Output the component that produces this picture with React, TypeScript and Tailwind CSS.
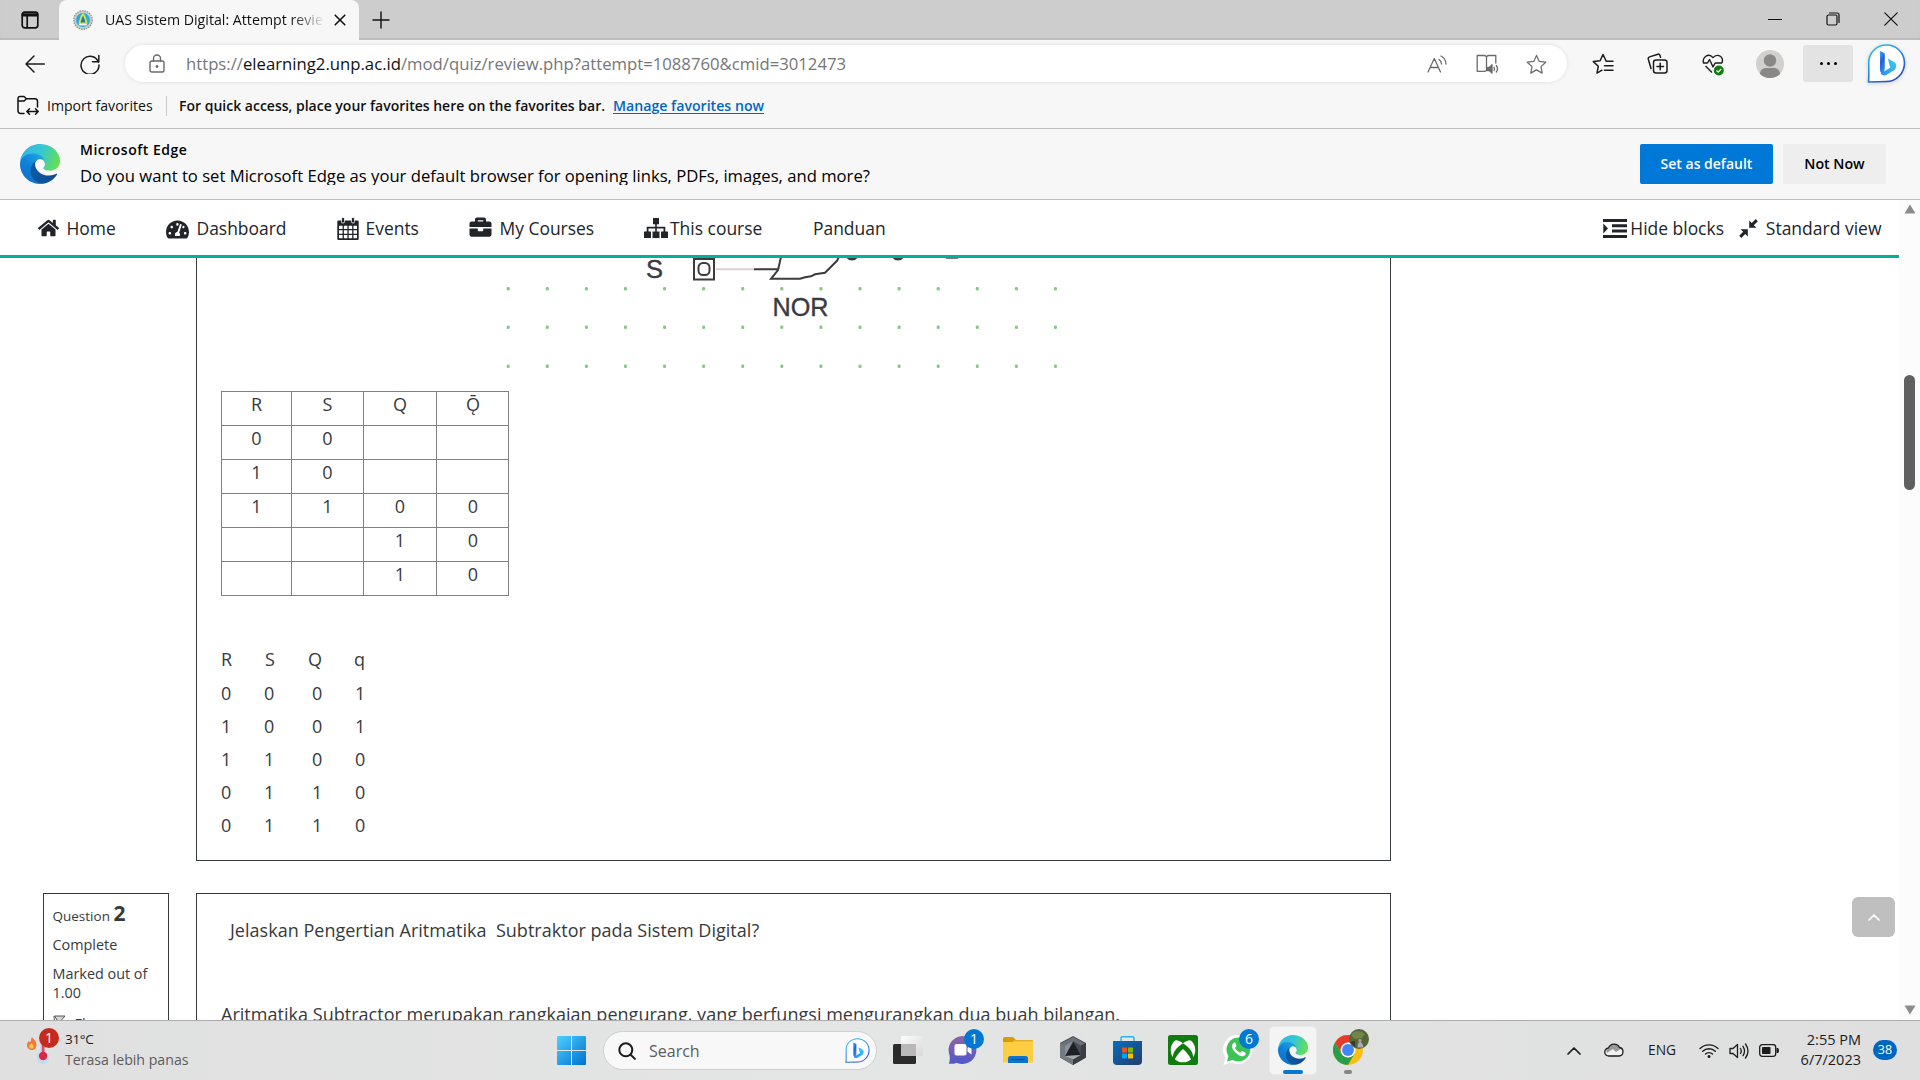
import React from "react";
import { FaHome, FaTachometerAlt, FaBriefcase } from "react-icons/fa";

type Box = { className?: string };

const BingMark = ({ id, className }: Box & { id: string }) => (
  <svg viewBox="0 0 38 39" className={className}>
    <defs>
      <linearGradient id={`${id}r`} x1="0" y1="0" x2="0.6" y2="1">
        <stop offset="0" stopColor="#22c8f4" />
        <stop offset="0.55" stopColor="#2b8be8" />
        <stop offset="1" stopColor="#1d4fc4" />
      </linearGradient>
      <linearGradient id={`${id}b`} x1="0" y1="0" x2="0.3" y2="1">
        <stop offset="0" stopColor="#3fa8f5" />
        <stop offset="0.5" stopColor="#2360dc" />
        <stop offset="1" stopColor="#2b8cf0" />
      </linearGradient>
      <linearGradient id={`${id}s`} x1="0" y1="1" x2="1" y2="0">
        <stop offset="0" stopColor="#2b8cf0" />
        <stop offset="1" stopColor="#35d3f2" />
      </linearGradient>
    </defs>
    <path d="M19 1C29 1 37 9 37 19S29 37.500 19 37.500C15 37.500 12 37.500 1 38C1.500 34 1.500 30 1.200 19C1 9 9 1 19 1Z" fill="#fff" stroke={`url(#${id}r)`} strokeWidth="1.600" />
    <path d="M20.500 14.500l7 4c2 2.500 1.500 5.500-.5 7.500l-8.300 5c-2.200 1-4.600.2-5.600-1.400L23 23.500l-1.500-4z" fill={`url(#${id}s)`} />
    <path d="M12.500 7l3.500 1.500q1.300.6 1.300 2V24q0 3.500-2 6c-1.700-.5-2.800-2.200-2.800-4.200z" fill={`url(#${id}b)`} />
  </svg>
);

const EdgeLogo = ({ id, className }: Box & { id: string }) => (
  <svg viewBox="0 0 256 256" className={className}>
    <defs>
      <linearGradient id={`${id}a`} x1="0.1" y1="0.5" x2="1" y2="0.5">
        <stop offset="0" stopColor="#0c59a4" />
        <stop offset="1" stopColor="#114a8b" />
      </linearGradient>
      <linearGradient id={`${id}b`} x1="0.8" y1="0.2" x2="0.3" y2="1">
        <stop offset="0" stopColor="#1b9de2" />
        <stop offset="0.5" stopColor="#0f7fd6" />
        <stop offset="1" stopColor="#0d6fcb" />
      </linearGradient>
      <linearGradient id={`${id}c`} x1="0" y1="0.3" x2="1" y2="0.55">
        <stop offset="0" stopColor="#35b5ea" />
        <stop offset="0.5" stopColor="#36c6d2" />
        <stop offset="1" stopColor="#66e04e" />
      </linearGradient>
    </defs>
    <path d="M231 190.500c-3.400 1.800-6.900 3.400-10.500 4.700a101 101 0 0 1-35.900 6.500c-47.300 0-88.500-32.500-88.500-74.300.1-11.400 6.400-21.900 16.400-27.300-42.800 1.800-53.800 46.400-53.800 72.500 0 74 68.100 81.400 82.800 81.400 7.900 0 19.800-2.300 27-4.600l1.300-.4a128 128 0 0 0 66.600-52.800 4 4 0 0 0-5.400-5.700z" fill={`url(#${id}a)`} />
    <path d="M105.700 241.400A79 79 0 0 1 83 220.100a80.700 80.700 0 0 1 29.500-120c3.200-1.500 8.500-4.100 15.600-4a32.400 32.400 0 0 1 25.700 13c4 5.300 6.200 11.800 6.300 18.500 0-.2 24.500-79.600-80-79.600C36.200 48 .1 89.700.1 126.200c-.2 19.300 4 38.500 12.100 56a128 128 0 0 0 156.400 67.100 75.600 75.600 0 0 1-62.800-8z" fill={`url(#${id}b)`} />
    <path d="M152.300 148.900c-.9 1-3.400 2.500-3.400 5.600 0 2.600 1.700 5.200 4.800 7.300 14.400 10.100 41.700 8.700 41.800 8.700 10.700 0 21.200-2.900 30.500-8.300a61.800 61.800 0 0 0 30.400-53.300c.3-22.400-8-37.300-11.300-43.900C223.900 23.900 177.700 0 127.600 0 57.500 0 .6 56.200 0 126.200c.5-36.500 36.800-66 80-66 3.500 0 23.500.3 42 10.100 16.300 8.500 24.900 18.900 30.900 29.200 6.100 10.700 7.300 24.100 7.300 29.500s-2.700 13.300-7.900 19.900z" fill={`url(#${id}c)`} />
  </svg>
);

const Line = ({ children, className, box, w = 1.3 }: { children: React.ReactNode; className?: string; box: string; w?: number }) => (
  <svg viewBox={box} className={className} fill="none" stroke="currentColor" strokeWidth={w} strokeLinecap="round" strokeLinejoin="round">
    {children}
  </svg>
);

const TabStrip = () => (
  <div className="flex h-10 items-start bg-[#cdcdcd] text-[#111] shadow-[inset_0_-2px_1px_#bdbdbd]">
    <Line box="0 0 18 18" className="ml-[21px] mt-[11px] h-[18px] w-[18px]" w={1.7}>
      <rect x="1.200" y="1.200" width="15.600" height="15.600" rx="2.500" />
      <path d="M1.500 3.200h15M1.500 4.600h15M6.200 5v11.500" />
    </Line>
    <div className="ml-5 flex h-10 w-[300px] items-center rounded-t-lg bg-[#f7f7f7]">
      <svg viewBox="0 0 20 20" className="ml-[14px] h-5 w-5 shrink-0">
        <circle cx="10" cy="10" r="9.300" fill="#c9ccc6" stroke="#8b9494" strokeWidth="1.200" strokeDasharray="1.500 1" />
        <circle cx="10" cy="10" r="7" fill="#2aa9dc" />
        <path d="M10 3l2 2.500 2.500 7-1.500 1H7l-1.500-1L8 5.500z" fill="#e3e33d" />
        <path d="M10 5.500l1.500 3.500 1 3.500h-5l1-3.500z" fill="#1e7bb8" />
        <path d="M5.500 13.500h9l-1 2h-7z" fill="#eef3f0" />
      </svg>
      <div className="ml-[12px] w-[218px] overflow-hidden bg-linear-to-r from-[#111] from-85% to-[#e8e8e8] bg-clip-text text-[14.2px] whitespace-nowrap text-transparent">UAS Sistem Digital: Attempt revie</div>
      <Line box="0 0 12 12" className="ml-[11px] h-3 w-3 shrink-0" w={1.6}><path d="M1.200 1.200l9.600 9.600M10.800 1.200l-9.600 9.600" /></Line>
    </div>
    <Line box="0 0 18 18" className="ml-[13px] mt-[10.500px] h-[18px] w-[18px]" w={1.4}><path d="M9 1v16M1 9h16" /></Line>
    <div className="mt-3 mr-[22px] ml-auto flex items-center gap-[44px]">
      <Line box="0 0 14 14" className="h-[14px] w-[14px]" w={1.2}><path d="M.5 7.500h13" /></Line>
      <Line box="0 0 14 14" className="h-[14px] w-[14px]" w={1.2}><rect x="1" y="3" width="10" height="10" rx="1.500" /><path d="M3.500 1h7.500a2 2 0 0 1 2 2v7.500" /></Line>
      <Line box="0 0 14 14" className="h-[14px] w-[14px]" w={1.2}><path d="M.8.8l12.400 12.400M13.200.8L.8 13.200" /></Line>
    </div>
  </div>
);

const STAR = "M11 1.500l2.900 6.300 6.800.8-5 4.700 1.300 6.800-6-3.400-6 3.400 1.300-6.800-5-4.700 6.800-.8z";

const Toolbar = () => (
  <div className="flex h-[48px] items-start pt-[5px] text-[#1c1c1c]">
    <div className="flex h-[37px] w-[125px] shrink-0 items-center">
      <Line box="0 0 20 18" className="ml-[25px] h-[18px] w-5" w={1.5}><path d="M19.300 9H1M9 1L1 9l8 8" /></Line>
      <Line box="0 0 20 20" className="ml-[35px] h-5 w-5" w={1.5}><path d="M18.500 8.300A9 9 0 1 0 19 11M18.800 1.500v6.300h-6.300" /></Line>
    </div>
    <div className="flex h-[37px] w-[1442px] shrink-0 items-center rounded-full bg-white text-[#6b6b6b] shadow-[0_0_4px_#dedede]">
      <Line box="0 0 16 19" className="ml-[24px] h-[19px] w-4" w={1.4}>
        <rect x="1" y="7" width="14" height="11" rx="1.800" /><path d="M4.500 7V4.500a3.500 3.500 0 0 1 7 0V7" /><circle cx="8" cy="12.500" r=".7" fill="currentColor" />
      </Line>
      <div className="ml-[21px] text-[16.72px] whitespace-nowrap text-[#767676]">https://<span className="text-[#111]">elearning2.unp.ac.id</span>/mod/quiz/review.php?attempt=1088760&amp;cmid=3012473</div>
      <Line box="0 0 20 18" className="mr-[29px] ml-auto h-[18px] w-5" w={1.3}>
        <path d="M1 17L7.300 3.500 13.500 17M3.200 12.500h8.200M12 4.500c1.700 1 2.500 2.500 2.500 4.500M14 1c3 1.600 4.800 4.500 5 8" />
      </Line>
      <Line box="0 0 23 20" className="mr-[27px] h-5 w-[23px]" w={1.3}>
        <path d="M10.500 3v13.500M10.500 3C10 1.500 9 1.500 8 1.500H1.200v15.800H8c1 0 2-.3 2.500-1M10.500 3c.5-1.500 1.500-1.500 2.500-1.500h6.800V9" />
        <path d="M11.500 13.500h1.800l2.700-2.700v8.200l-2.700-2.500h-1.800z" fill="currentColor" /><path d="M18 13.300c.6 1 .6 2.200 0 3.200M20.300 11.500c1.500 2 1.500 4.500 0 6.500" />
      </Line>
      <Line box="0 0 22 21" className="mr-[20px] h-5 w-[21px]" w={1.3}><path d={STAR} /></Line>
    </div>
    <div className="flex h-[37px] shrink-0 items-center">
      <Line box="0 0 22 21" className="ml-[25px] h-[21px] w-[22px]" w={1.5}><path d="M14 7.800L11 1.500 8.100 7.800l-6.800.8 5 4.700L5 20.100l5-2.900M14 8.200h7M12.500 12.800H21M12.500 17.200H21" /></Line>
      <Line box="0 0 21 21" className="ml-[33px] h-[21px] w-[21px]" w={1.5}><rect x="6.500" y="7" width="13.500" height="13" rx="2.500" /><path d="M13.200 10.200v6.600M10 13.500h6.500M4 15.500L1.300 6.300c-.3-1.200.2-2 1.200-2.400L11 1.200c1-.3 1.700.2 2 1.300l.5 1.700" /></Line>
      <svg viewBox="0 0 22 22" className="mt-[2px] ml-[34px] h-[22px] w-[22px]" fill="none" stroke="#1c1c1c" strokeWidth="1.400" strokeLinejoin="round">
        <path d="M10 18.500L3.500 12M20 9c1-3 .5-5-1.300-6.500C16 .8 13 1.300 11 3.600 9 1.300 6 .8 3.500 2.500 1.300 4.300.7 6.500 1.500 9H5.500l2-3.500 3.500 7.400 2.200-3.900H20" />
        <circle cx="16.800" cy="16.500" r="5" fill="#107c10" stroke="none" /><path d="M14.500 16.500l1.700 1.700 3-3.200" stroke="#fff" strokeWidth="1.200" />
      </svg>
      <svg viewBox="0 0 28 28" className="ml-[32px] h-7 w-7">
        <circle cx="14" cy="14" r="14" fill="#d2d0ce" /><circle cx="14" cy="10.500" r="6.200" fill="#8a8886" /><path d="M4 24c0-4 3-6 6-6h8c3 0 6 2 6 6-2.500 2.600-6 4-10 4s-7.500-1.400-10-4z" fill="#8a8886" />
      </svg>
      <div className="ml-[19px] flex h-[37px] w-[50px] items-center justify-center gap-1 rounded-[3px] bg-[#e3e3e3]">
        <i className="size-[3px] rounded-full bg-black" /><i className="size-[3px] rounded-full bg-black" /><i className="size-[3px] rounded-full bg-black" />
      </div>
      <BingMark id="bt" className="ml-[14px] h-[39px] w-[39px] drop-shadow-sm" />
    </div>
  </div>
);

const FavoritesBar = () => (
  <div className="flex h-[41px] items-start border-b border-[#bfbfbf] text-[#111]">
    <Line box="0 0 22 20" className="mt-[7px] ml-[17px] h-5 w-[22px] shrink-0" w={1.5}>
      <path d="M7 18.500H3.500A2.500 2.500 0 0 1 1 16V3.500A2 2 0 0 1 3 1.500h4l2.500 2.200h8.500A2.500 2.500 0 0 1 20.500 6v6M1 6h6l2.500-2.300M10 16.500h11M12.500 13.800L9.800 16.500l2.700 2.700M18.500 13.800l2.700 2.700-2.700 2.700" />
    </Line>
    <div className="ml-[8px] w-[119px] text-[14.1px] leading-[35px]">Import favorites</div>
    <div className="mt-2 h-5 w-px bg-[#c8c8c8]" />
    <div className="ml-[12px] w-[434px] text-[14px] leading-[35px] font-semibold whitespace-nowrap">For quick access, place your favorites here on the favorites bar.</div>
    <div className="text-[14.15px] leading-[35px] font-semibold text-[#0067c0] underline underline-offset-2">Manage favorites now</div>
  </div>
);

const DefaultPrompt = () => (
  <div className="flex h-[71px] items-center border-b border-[#bfbfbf] text-black">
    <EdgeLogo id="ei" className="ml-5 h-10 w-10" />
    <div className="-mt-[1px] ml-5 h-[56px] flex-1">
      <div className="h-[29px] pt-[1px] text-[14px] leading-[26px] font-semibold tracking-[0.5px]">Microsoft Edge</div>
      <div className="h-[20px] overflow-hidden text-[16.65px] leading-[22px]">Do you want to set Microsoft Edge as your default browser for opening links, PDFs, images, and more?</div>
    </div>
    <div className="h-10 w-[133px] rounded-[2px] bg-[#0078d7] text-center text-[14px] leading-[39px] font-semibold text-white">Set as default</div>
    <div className="mr-[34px] ml-[10px] h-10 w-[103px] rounded-[2px] bg-[#eeeeee] text-center text-[14.2px] leading-[39px] font-semibold">Not Now</div>
  </div>
);

const CalendarIcon = () => (
  <svg viewBox="0 0 22 23" className="h-[23px] w-[22px]">
    <path d="M1.500 3.500h19a1.200 1.200 0 0 1 1.200 1.200v17a1.200 1.200 0 0 1-1.200 1.200h-19A1.200 1.200 0 0 1 .3 21.700v-17A1.200 1.200 0 0 1 1.500 3.500z" fill="#212529" />
    <path d="M2 8.700h3.600v3.400H2zM6.900 8.700h3.500v3.400H6.900zM11.700 8.700h3.500v3.400h-3.500zM16.500 8.700h3.500v3.400h-3.500zM2 13.300h3.600v3.400H2zM6.900 13.300h3.500v3.400H6.900zM11.700 13.300h3.500v3.400h-3.500zM16.500 13.300h3.500v3.400h-3.500zM2 17.900h3.600v3.400H2zM6.900 17.900h3.500v3.400H6.900zM11.700 17.900h3.500v3.400h-3.500zM16.500 17.900h3.500v3.400h-3.500z" fill="#fff" />
    <rect x="4.500" y=".5" width="3" height="5.500" rx="1.300" fill="#212529" stroke="#fff" strokeWidth=".8" />
    <rect x="14.500" y=".5" width="3" height="5.500" rx="1.300" fill="#212529" stroke="#fff" strokeWidth=".8" />
  </svg>
);

const SiteNav = () => (
  <div className="flex h-[58px] shrink-0 items-center border-b-[3px] border-[#00b29c] pt-[2px] text-[17.45px] whitespace-nowrap text-[#212529]">
    <div className="ml-[38px] flex w-[128px] items-center"><FaHome className="h-[20px] w-[21px]" /><span className="ml-[7.5px]">Home</span></div>
    <div className="flex w-[171px] items-center"><FaTachometerAlt className="mt-[2px] h-[23px] w-[23px]" /><span className="ml-[7.5px]">Dashboard</span></div>
    <div className="flex w-[132px] items-center"><CalendarIcon /><span className="ml-[6.5px]">Events</span></div>
    <div className="flex w-[175px] items-center"><FaBriefcase className="-mt-[3px] h-[22px] w-[23px]" /><span className="ml-[7.5px]">My Courses</span></div>
    <div className="flex w-[169px] items-center">
      <svg viewBox="0 0 24 20" className="h-5 w-6" fill="currentColor"><path d="M9 0h6v6.200h-2.200v2.500h8.500v4.800H24V20h-7v-6.500h2.500v-3h-6.700v3h2.700V20h-7v-6.500h2.700v-3H4.500v3H7V20H0v-6.500h2.700V8.700h8.500V6.200H9z" /></svg>
      <span className="ml-[2px]">This course</span>
    </div>
    <span>Panduan</span>
    <svg viewBox="0 0 24 19" className="ml-auto h-[19px] w-6" fill="currentColor"><path d="M0 0h24v3H0zM9 5.300h15v3H9zM9 10.600h15v3H9zM0 16h24v3H0zM.3 4.500L5 9.500.3 14.500z" /></svg>
    <span className="ml-[3px] w-[109px]">Hide blocks</span>
    <svg viewBox="0 0 19 19" className="h-[19px] w-[19px]" fill="currentColor"><path d="M8.800 10.200v7.300l-2.600-2.600L2.300 18.900.2 16.800l4-4-2.700-2.600zM10.200 8.800V1.500l2.600 2.600L16.700.1l2.100 2.100-4 4 2.700 2.600z" /></svg>
    <span className="mr-[17.5px] ml-[7.5px] text-[17.5px]">Standard view</span>
  </div>
);

const Diagram = () => (
  <svg viewBox="490 258 600 130" className="ml-[293px] h-[130px] w-[600px]" fontFamily="Liberation Sans, Arial, sans-serif">
    {[288.500, 327, 366].map((y) =>
      Array.from({ length: 15 }, (_, i) => <rect key={`${y}${i}`} x={506.700 + i * 39.090} y={y - 1.500} width="3" height="3.400" rx="1.200" fill="#86c886" />)
    )}
    <g fill="#3a3a42" stroke="#3a3a42" strokeWidth=".4">
      <text x="646" y="277.500" fontSize="25.500">S</text>
      <text x="772.500" y="316" fontSize="26.500" textLength="56" lengthAdjust="spacingAndGlyphs">NOR</text>
    </g>
    <g fill="none" stroke="#3c3c3c" strokeWidth="2">
      <rect x="694" y="259" width="20" height="20.500" />
      <rect x="698.500" y="263" width="11" height="12" rx="4.500" />
      <path d="M716 269.200h38" stroke="#d8d0d8" />
      <path d="M754 269.200h24M781 257l-3 13-7 8.800h29l5-1.500 6-1 4-2 10-1.500 3-3 5-5 4-4 2-4" />
    </g>
    <path d="M846 257h12q-2 3.500-6 3.500t-6-3.500zM892 257h12q-2 3.500-6 3.500t-6-3.500z" fill="#3c3c3c" />
    <path d="M946 258.500h12" stroke="#777" />
  </svg>
);

const truth = [["R", "S", "Q", "Ǭ"], ["0", "0", "", ""], ["1", "0", "", ""], ["1", "1", "0", "0"], ["", "", "1", "0"], ["", "", "1", "0"]];
const answer = [["R", "S", "Q", "q"], ["0", "0", "0", "1"], ["1", "0", "0", "1"], ["1", "1", "0", "0"], ["0", "1", "1", "0"], ["0", "1", "1", "0"]];

const Page = () => (
  <div className="min-h-0 flex-1 overflow-hidden text-[18px] text-[#373a3c]">
    <div className="ml-[196px] h-[603px] w-[1195px] border border-t-0 border-[#373a3c]">
      <Diagram />
      <div className="mt-[3px] ml-6 grid w-[288px] grid-cols-[70px_72px_73px_73px] border-r border-b border-[#808080]">
        {truth.flat().map((v, i) => (
          <div key={i} className="h-[34px] border-t border-l border-[#808080] text-center leading-[24px]">{v}</div>
        ))}
      </div>
      <div className="mt-[48px] ml-6">
        {answer.map((row, r) => (
          <div key={r} className={r === 0 ? "grid h-[34px] grid-cols-[44px_43px_46px_20px]" : "grid h-[33px] grid-cols-[43px_48px_43px_20px]"}>
            {row.map((v, c) => <span key={c} className="leading-[30px]">{v}</span>)}
          </div>
        ))}
      </div>
    </div>
    <div className="mt-[32px] flex h-[200px]">
      <div className="ml-[43px] w-[126px] border border-[#373a3c] pl-[8.5px] text-[14.4px]">
        <div className="mt-[5px] h-[28px] text-[13.5px] leading-[28px]">Question <span className="text-[21px] font-bold">2</span></div>
        <div className="mt-[8px] leading-[20px]">Complete</div>
        <div className="mt-[9px] leading-[19px]">Marked out of<br />1.00</div>
        <div className="mt-[12px] flex items-center gap-[8px] leading-[20px]">
          <svg viewBox="0 0 14 16" className="-mt-1 h-4 w-[14px]" fill="#d5d5d5" stroke="#555" strokeWidth="1"><path d="M2 15L1 2M1.500 2H12L6 9z" /></svg>
          <span>Flag</span>
        </div>
      </div>
      <div className="ml-[27px] w-[1195px] border border-[#373a3c] pl-6 whitespace-pre">
        <div className="mt-[22px] ml-[9px] h-[28px] tracking-[0.02px] leading-[28px]">Jelaskan Pengertian Aritmatika  Subtraktor pada Sistem Digital?</div>
        <div className="mt-[56px] tracking-[0.025px] leading-[28px]">Aritmatika Subtractor merupakan rangkaian pengurang, yang berfungsi mengurangkan dua buah bilangan.</div>
      </div>
    </div>
  </div>
);

const Scrollbar = () => (
  <div className="flex w-[21px] flex-col items-center bg-[#fcfcfc]">
    <svg viewBox="0 0 12 10" className="mt-[4px] h-[10px] w-3"><path d="M6 .5L11.500 9.500H.5z" fill="#8b8b8b" /></svg>
    <div className="mt-[161px] h-[115px] w-[11px] rounded-full bg-[#606060]" />
    <svg viewBox="0 0 12 10" className="mt-auto mb-[5px] h-[10px] w-3"><path d="M6 9.500L11.500.5H.5z" fill="#8b8b8b" /></svg>
  </div>
);

const Badge = ({ children, className }: { children: React.ReactNode; className: string }) => (
  <span className={`absolute flex size-5 items-center justify-center rounded-full text-[14px] leading-none text-white ${className}`}>{children}</span>
);

const Taskbar = () => (
  <div className="flex h-[60px] shrink-0 border-t border-[#adadad] bg-linear-to-r from-[#e0e0e0] via-[#e4e5e5] via-45% to-[#dfdfe0] text-[#1c1c1c]">
    <div className="flex h-full w-[557px] shrink-0 items-start">
      <div className="relative mt-[14px] ml-[26px] h-[34px] w-[39px]">
        <svg viewBox="0 0 34 34" className="h-[34px] w-[34px]">
          <path d="M6 2c1 2 4.500 4 4.500 7.500S8.500 15 6 15s-5-1.500-5-5c0-2 1-2.500 1.500-4 1 1 1.500 1 2 1C5 5 5 4 6 2z" fill="#f0793c" />
          <path d="M5.500 8c1.500 1.500 2.500 3 2 4.500S3.500 14 3.300 12s1-2.500 2.200-4z" fill="#ffc24a" />
          <path d="M14 2h6v15a6.500 6.500 0 1 1-6 0z" fill="#c3dcf3" /><path d="M15.800 2h2.600v17h-2.600z" fill="#e8485c" /><circle cx="17.100" cy="21" r="4.200" fill="#dc2748" />
        </svg>
        <Badge className="-top-[7px] left-[13px] bg-[#c42b1c]">1</Badge>
      </div>
      <div className="mt-[8px] leading-[20px]"><div className="h-[21px] text-[13.5px] tracking-[-0.3px]">31°C</div><div className="text-[14.15px] text-[#5c5c5c]">Terasa lebih panas</div></div>
    </div>
    <svg viewBox="0 0 29 29" className="mt-[15px] h-[29px] w-[29px] shrink-0">
      <defs><linearGradient id="win" x1="0" y1="0" x2="1" y2="1"><stop offset="0" stopColor="#4fd0ff" /><stop offset="1" stopColor="#0070d0" /></linearGradient></defs>
      <path d="M1 0h13v14H0V1q0-1 1-1zM15 0h13q1 0 1 1v13H15zM0 15h14v14H1q-1 0-1-1zM15 15h14v13q0 1-1 1H15z" fill="url(#win)" />
    </svg>
    <div className="mt-[10px] ml-[17px] flex h-[39px] w-[274px] shrink-0 items-center rounded-full border border-[#cfcfcf] bg-[#f8f8f8]">
      <Line box="0 0 18 18" className="ml-[14px] h-[18px] w-[18px]" w={2}><circle cx="7.800" cy="7.800" r="6.500" /><path d="M12.700 12.700l4.200 4.200" /></Line>
      <span className="ml-[13px] text-[16px] text-[#5c5c5c]">Search</span>
      <BingMark id="bs" className="mr-[6px] ml-auto h-[25px] w-[25px]" />
    </div>
    <svg viewBox="0 0 30 28" className="mt-[15px] ml-[16px] h-7 w-[30px] shrink-0">
      <defs><linearGradient id="tv" x1="0" y1="0" x2="1" y2="1"><stop offset="0" stopColor="#fdfdfd" /><stop offset="1" stopColor="#d8d8d8" /></linearGradient></defs>
      <rect y="8" width="23" height="20" rx="1.500" fill="#2b2b2b" /><rect x="8" width="22" height="20" rx="1.500" fill="url(#tv)" /><path d="M8 8h15v12H8z" fill="#b9b9b9" />
    </svg>
    <div className="relative mt-[15px] ml-[25px] h-7 w-[29px] shrink-0">
      <svg viewBox="0 0 29 28" className="h-7 w-[29px]">
        <defs><linearGradient id="ch" x1="0" y1="0" x2="0" y2="1"><stop offset="0" stopColor="#9061a8" /><stop offset="1" stopColor="#5059c9" /></linearGradient></defs>
        <path d="M14.500 0a14 14 0 1 1-6 26.700C6 28 3 28 .8 27.600 2 25 2 22.500 1.500 19A14 14 0 0 1 14.500 0z" fill="url(#ch)" />
        <rect x="6.500" y="8" width="12" height="11.500" rx="2" fill="#fff" /><path d="M19.500 12l4-3v9.500l-4-3z" fill="#fff" />
      </svg>
      <Badge className="-top-[7px] left-[16px] bg-[#0078d4]">1</Badge>
    </div>
    <svg viewBox="0 0 30 27" className="mt-[16px] ml-[26px] h-[27px] w-[30px] shrink-0">
      <path d="M0 1.500Q0 0 1.500 0H10l3 3-2 3H0z" fill="#dc9a05" /><path d="M0 5h9.500l2.500-1.800H30V25.500H0z" fill="#ffcd41" /><path d="M12 3.200h18V4.200H11z" fill="#d9a01c" />
      <path d="M5 26v-4.500q0-2.500 2.500-2.500h15q2.500 0 2.500 2.500V26z" fill="#0c75cc" /><path d="M8.500 22.500h13" stroke="#064f93" strokeWidth="1.200" />
    </svg>
    <svg viewBox="0 0 28 29" className="mt-[15px] ml-[26px] h-[29px] w-7 shrink-0">
      <path d="M14 0l13 7v14.500L14 29 1 21.500V7z" fill="#4a4e54" /><path d="M14 1l12 6.500-4 2L14 5 6 9.500l-4-2z" fill="#6b7178" /><path d="M14 29v-5l8-4.500v-10l5-2.500v14.500z" fill="#3a3e44" /><path d="M1 7l5 2.500v10l8 4.500v5L1 21.500z" fill="#747a81" /><path d="M14.500 6l7 13-15.500 1z" fill="#1d2024" /><path d="M14 5l-8 4.500V20z" fill="#8b9198" /><path d="M21.500 19L14 23.500 6 20z" fill="#a6abb0" />
    </svg>
    <svg viewBox="0 0 29 29" className="mt-[15px] ml-[26px] h-[29px] w-[29px] shrink-0">
      <defs><linearGradient id="st" x1="0" y1="0" x2="1" y2="1"><stop offset="0" stopColor="#0a6cba" /><stop offset="1" stopColor="#223d70" /></linearGradient></defs>
      <path d="M8 5.500V2q0-1.300 1.300-1.300h10.400Q21 .7 21 2v3.500" fill="none" stroke="#2ab4e8" strokeWidth="1.400" /><path d="M0 5h29v20q0 4-4 4H4q-4 0-4-4z" fill="url(#st)" />
      <path d="M9 11.500h5v5H9z" fill="#f25022" /><path d="M15 11.500h5v5h-5z" fill="#7fba00" /><path d="M9 17.500h5v5H9z" fill="#00a4ef" /><path d="M15 17.500h5v5h-5z" fill="#ffb900" />
    </svg>
    <svg viewBox="0 0 30 30" className="mt-[14px] ml-[26px] h-[30px] w-[30px] shrink-0">
      <rect width="30" height="30" rx="2.500" fill="#107c10" /><circle cx="15" cy="15" r="12.300" fill="#fff" />
      <path d="M6.300 5.500C9 4.500 12 6 15 8.300 18 6 21 4.500 23.700 5.500 20 1 10 1 6.300 5.500zM11.500 10.800C7 14.500 3.500 20 5.500 24.500l1 1c1.200-4 5-8.500 8.500-11.500 3.500 3 7.300 7.500 8.500 11.500l1-1c2-4.500-1.500-10-6-13.700L15 8.300z" fill="#107c10" />
    </svg>
    <div className="relative mt-[14px] ml-[25px] h-[30px] w-[30px] shrink-0">
      <svg viewBox="0 0 30 30" className="h-[30px] w-[30px]">
        <path d="M15.500 0A14.500 14.500 0 1 1 8.500 27.500L.5 30l2-7.500A14.500 14.500 0 0 1 15.500 0z" fill="#fff" /><path d="M15.500 2.500A12 12 0 1 1 9.500 25L4 26.500 5.500 21A12 12 0 0 1 15.500 2.500z" fill="#3dc454" />
        <path d="M10.500 8c-3 2.500-1.500 6 2 9.500s7.500 5.200 9.800 2.300c.8-1.300.5-2.100-.5-2.600l-2.400-1.200c-1-.4-1.600 1.900-2.500 1.600-2-.7-4-2.500-4.800-4.500-.3-.8 1.700-1.500 1.300-2.700l-1-2.400c-.5-.8-1.300-.7-1.900 0z" fill="#fff" />
      </svg>
      <Badge className="-top-[6px] left-[16px] bg-[#0078d4]">6</Badge>
    </div>
    <div className="mt-[5px] ml-[16px] flex h-[49px] w-[48px] shrink-0 flex-col items-center rounded-[5px] border border-[#e9e9e9] bg-[#f4f4f4]">
      <EdgeLogo id="et" className="mt-[8px] h-[30px] w-[30px]" />
      <div className="mt-[5px] h-1 w-5 shrink-0 rounded-full bg-[#0078d4]" />
    </div>
    <div className="relative mt-[14px] ml-[16px] w-[30px] shrink-0">
      <svg viewBox="0 0 48 48" className="h-[30px] w-[30px]">
        <circle cx="24" cy="24" r="24" fill="#fbbf12" />
        <path d="M44.800 12A24 24 0 0 0 3.200 12l10.400 18L24 12z" fill="#e33b2e" />
        <path d="M3.200 12A24 24 0 0 0 24 48l10.400-18H24L13.600 30z" fill="#2a9d48" />
        <circle cx="24" cy="24" r="12" fill="#fff" /><circle cx="24" cy="24" r="9.500" fill="#4285f4" />
      </svg>
      <svg viewBox="0 0 20 20" className="absolute -top-[6px] left-[16px] size-5">
        <circle cx="10" cy="10" r="10" fill="#54663a" /><path d="M2 5q7-6 14 0l-3 4-8 1z" fill="#6f8549" /><circle cx="11" cy="11.500" r="1.700" fill="#b8957c" /><path d="M8.500 18.500q0-5.500 2.500-5.500t3.500 5.500z" fill="#a8a8b8" /><path d="M1 13l5-1v6z" fill="#37352c" />
      </svg>
      <div className="mt-[5px] ml-[11px] h-1 w-2 rounded-full bg-[#868686]" />
    </div>
    <div className="mr-[23px] ml-auto flex h-full items-center">
      <Line box="0 0 14 8" className="h-2 w-[14px]" w={1.7}><path d="M1 7l6-6 6 6" /></Line>
      <svg viewBox="0 0 20 14" className="-mt-[2px] ml-[23px] h-[14px] w-5"><path d="M5 13a4 4 0 0 1-.5-8 6 6 0 0 1 11-.500A4.300 4.300 0 0 1 15 13z" fill="#f2f2f2" /><path d="M2 6.500l3-1A5.500 5.500 0 0 1 15 4l2 1.800L12 9l-3-3-6 4z" fill="#999" /><path d="M5 13a4 4 0 0 1-.5-8 6 6 0 0 1 11-.500A4.300 4.300 0 0 1 15 13z" fill="none" stroke="#1c1c1c" strokeWidth="1.300" /></svg>
      <span className="ml-[24px] w-[51px] text-[13.75px]">ENG</span>
      <Line box="0 0 20 15" className="h-[15px] w-5" w={1.4}><path d="M1 5.500a13 13 0 0 1 18 0M3.700 8.300a9.200 9.200 0 0 1 12.600 0M6.500 11a5.200 5.200 0 0 1 7 0" /><circle cx="10" cy="13.500" r=".8" fill="currentColor" /></Line>
      <Line box="0 0 20 16" className="ml-[10px] h-4 w-5" w={1.3}><path d="M1 5.500h3l4.500-4v13L4 10.500H1zM11.500 5.500q1.500 2.500 0 5M14 3.300q3 4.700 0 9.400M16.500 1q5 7 0 14" /></Line>
      <svg viewBox="0 0 20 13" className="ml-[10px] h-[13px] w-5"><rect x=".7" y=".7" width="16" height="11.600" rx="2.500" fill="none" stroke="#1c1c1c" strokeWidth="1.300" /><rect x="3" y="3" width="8.500" height="7" rx=".8" fill="#1c1c1c" /><path d="M17.500 4h1.200q1.300 0 1.300 2.500T18.700 9h-1.200z" fill="#1c1c1c" /></svg>
      <div className="-mt-[2px] w-[82px] text-right text-[14.5px] leading-5">2:55 PM<br />6/7/2023</div>
      <div className="-mt-[1px] ml-[12px] h-5 w-6 rounded-full bg-[#0067c0] text-center text-[12.5px] leading-5 text-white">38</div>
    </div>
  </div>
);

export default function App() {
  return (
    <div className="relative flex h-[1080px] w-[1920px] flex-col overflow-hidden bg-[#f7f7f7] font-['Open_Sans','Noto_Sans',sans-serif]">
      <TabStrip />
      <Toolbar />
      <FavoritesBar />
      <DefaultPrompt />
      <div className="flex h-[820px] bg-white">
        <div className="flex w-[1899px] flex-col overflow-hidden">
          <SiteNav />
          <Page />
        </div>
        <Scrollbar />
      </div>
      <Taskbar />
      <div className="absolute top-[897px] left-[1852px] flex h-10 w-[43px] items-center justify-center rounded-md bg-[#bfbfbf] text-white">
        <Line box="0 0 12 7" className="h-[7px] w-3" w={1.7}><path d="M1 6l5-5 5 5" /></Line>
      </div>
    </div>
  );
}
